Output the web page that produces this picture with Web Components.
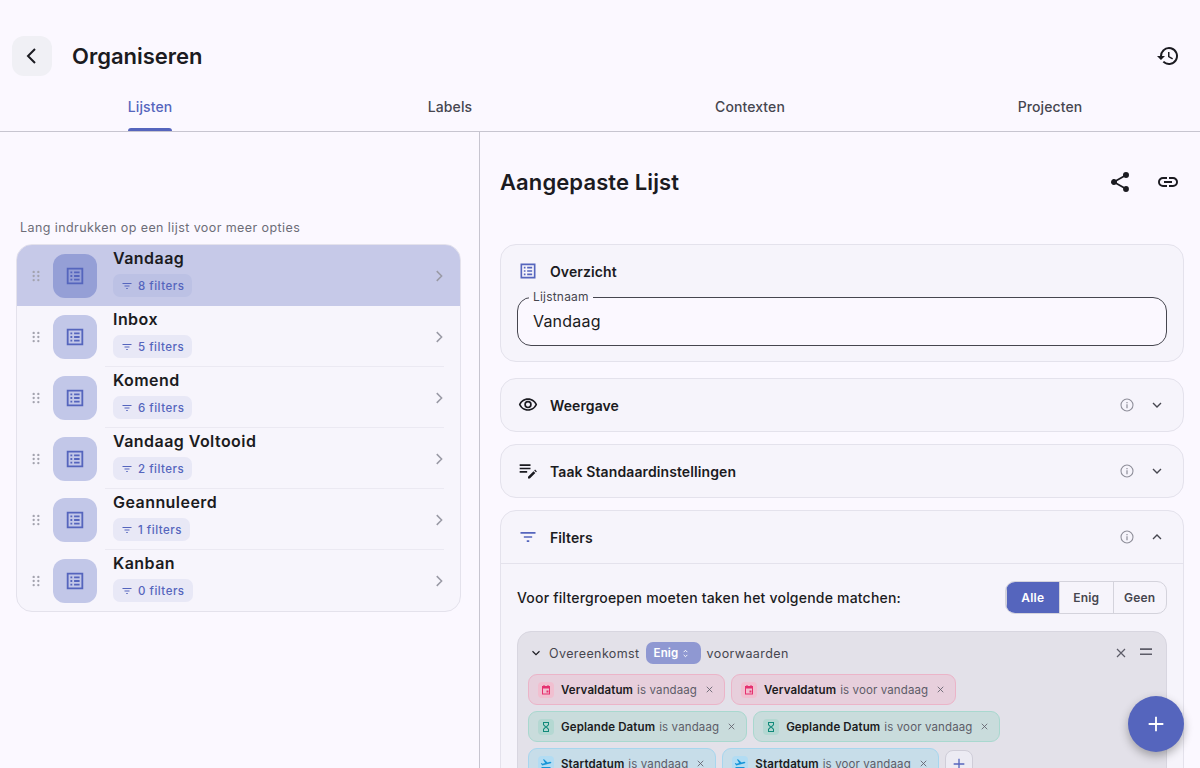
<!DOCTYPE html>
<html lang="nl">
<head>
<meta charset="utf-8">
<title>Organiseren</title>
<style>
  html, body { margin: 0; height: 100%; overflow: hidden; background: #fbf8ff; }
  body { font-family: Inter, "Liberation Sans", sans-serif; color: #1b1b21; }
</style>
</head>
<body>
<org-app></org-app>

<script>
// shared icon paths, 24x24 material style
const ICONS = {
  back: '<path d="M15 5l-7 7 7 7" fill="none" stroke="currentColor" stroke-width="2"/>',
  history: '<path fill="currentColor" d="M13 3a9 9 0 0 0-9 9H1l3.9 3.9.1.1L9 12H6a7 7 0 1 1 2.05 4.95l-1.42 1.42A9 9 0 1 0 13 3zm-1 5v5l4.25 2.52.77-1.28-3.52-2.09V8H12z"/>',
  share: '<path fill="currentColor" d="M18 16.08c-.76 0-1.44.3-1.96.77L8.91 12.7c.05-.23.09-.46.09-.7s-.04-.47-.09-.7l7.05-4.11c.54.5 1.25.81 2.04.81a3 3 0 1 0-3-3c0 .24.04.47.09.7L8.04 9.81A3 3 0 1 0 6 15c.79 0 1.5-.31 2.04-.81l7.12 4.16c-.05.21-.08.43-.08.65A2.92 2.92 0 1 0 18 16.08z"/>',
  link: '<path fill="currentColor" d="M3.9 12c0-1.71 1.39-3.1 3.1-3.1h4V7H7a5 5 0 0 0 0 10h4v-1.9H7c-1.71 0-3.1-1.39-3.1-3.1zM8 13h8v-2H8v2zm9-6h-4v1.9h4c1.71 0 3.1 1.39 3.1 3.1s-1.39 3.1-3.1 3.1h-4V17h4a5 5 0 0 0 0-10z"/>',
  list: '<path fill="currentColor" fill-rule="evenodd" d="M3 3h18v18H3V3zm2 2v14h14V5H5zm2 2h2v2H7V7zm4 0h6v2h-6V7zm-4 4h2v2H7v-2zm4 0h6v2h-6v-2zm-4 4h2v2H7v-2zm4 0h6v2h-6v-2z"/>',
  filter: '<path fill="currentColor" d="M3 6h18v2H3V6zm4 5h10v2H7v-2zm3.5 5h3v2h-3v-2z"/>',
  chevron: '<path d="M9 5.5l6.5 6.5L9 18.5" fill="none" stroke="currentColor" stroke-width="2"/>',
  down: '<path d="M6 9l6 6 6-6" fill="none" stroke="currentColor" stroke-width="2"/>',
  up: '<path d="M6 15l6-6 6 6" fill="none" stroke="currentColor" stroke-width="2"/>',
  eye: '<path fill="currentColor" d="M12 6a9.77 9.77 0 0 1 8.82 5.5A9.77 9.77 0 0 1 12 17a9.77 9.77 0 0 1-8.82-5.5A9.77 9.77 0 0 1 12 6m0-2C7 4 2.73 7.11 1 11.5 2.73 15.89 7 19 12 19s9.27-3.11 11-7.5C21.27 7.11 17 4 12 4zm0 5a2.5 2.5 0 1 1 0 5 2.5 2.5 0 0 1 0-5m0-2a4.5 4.5 0 1 0 0 9 4.5 4.5 0 0 0 0-9z"/>',
  edit: '<path fill="currentColor" d="M3 5h13v2H3V5zm0 4h13v2H3V9zm0 4h9v2H3v-2zm0 4h0zm11.5 5H13v-2.2l6.6-6.6 2.2 2.2-6.6 6.6h-.7zM20.4 12.4l1.1-1.1 2.2 2.2-1.1 1.1-2.2-2.2z" transform="translate(-1 -1)"/>',
  info: '<circle cx="12" cy="12" r="9" fill="none" stroke="currentColor" stroke-width="1.6"/><path fill="currentColor" d="M11.1 11h1.8v6h-1.8zM11.1 7.4h1.8v1.8h-1.8z"/>',
  close: '<path d="M6 6l12 12M18 6L6 18" fill="none" stroke="currentColor" stroke-width="1.8"/>',
  handle: '<path fill="currentColor" d="M3 5h18v2.4H3zM3 12.6h18V15H3z"/>',
  plus: '<path d="M12 4v16M4 12h16" fill="none" stroke="currentColor" stroke-width="2"/>',
  grip: '<g fill="currentColor"><circle cx="8" cy="5" r="2"/><circle cx="16" cy="5" r="2"/><circle cx="8" cy="12" r="2"/><circle cx="16" cy="12" r="2"/><circle cx="8" cy="19" r="2"/><circle cx="16" cy="19" r="2"/></g>',
  calendar: '<path fill="currentColor" fill-rule="evenodd" d="M7 2h2v2h6V2h2v2h3v17H4V4h3V2zM6 9v10h12V9H6zm7 4h4v4h-4v-4z"/>',
  hourglass: '<path fill="currentColor" fill-rule="evenodd" d="M6 2h12v6l-4 4 4 4v6H6v-6l4-4-4-4V2zm2 2v3.2L12 11l4-3.8V4H8zm4 9l-4 3.8V20h8v-3.2L12 13z"/>',
  plane: '<path fill="currentColor" d="M3 19h18v2H3v-2zm19.1-9.4c-.2-.8-1-1.3-1.8-1.1L15 10 8 3.5l-2 .5 4.2 7.2-5 1.4-2-1.6-1.5.4 2.6 4.6 17.2-4.6c.8-.2 1.3-1 1.1-1.8z" transform="translate(0 -1)"/>',
  updown: '<path d="M8 9l4-4 4 4M8 15l4 4 4-4" fill="none" stroke="currentColor" stroke-width="2"/>'
};

function icon(name, size) {
  return `<svg width="${size}" height="${size}" viewBox="0 0 24 24" style="display:block;flex:none">${ICONS[name]}</svg>`;
}

class OrgElement extends HTMLElement {
  constructor() {
    super();
    this.attachShadow({ mode: "open" });
  }
}

class OrgHeader extends OrgElement {
  connectedCallback() {
    this.shadowRoot.innerHTML = `
      <style>
        :host { display: flex; align-items: center; height: 40px; padding: 36px 20px 7px 12px; }
        #back { width: 40px; height: 40px; border-radius: 12px; background: #f0f0f5; display: flex; align-items: center; justify-content: center; color: #1b1b21; }
        h1 { margin: 0 0 0 20px; font-size: 22px; line-height: 40px; font-weight: 600; flex: 1; color: #1b1b21; }
        #hist { color: #1b1b21; }
      </style>
      <div id="back">${icon("back", 24)}</div>
      <h1><slot></slot></h1>
      <div id="hist">${icon("history", 24)}</div>`;
  }
}

class OrgTabs extends OrgElement {
  connectedCallback() {
    const active = this.getAttribute("active");
    const tabs = this.getAttribute("tabs").split(",");
    this.shadowRoot.innerHTML = `
      <style>
        :host { display: grid; grid-template-columns: repeat(4, 1fr); height: 48px; border-bottom: 1px solid #c7c5d0; }
        .tab { display: flex; justify-content: center; }
        span { position: relative; height: 48px; line-height: 48px; font-size: 14px; font-weight: 500; color: #46464f; letter-spacing: .1px; }
        .on span { color: #5565bd; }
        .on span::after { content: ""; position: absolute; left: 0; right: 0; bottom: 0; height: 3px; border-radius: 3px 3px 0 0; background: #5565bd; }
      </style>
      ${tabs.map(t => `<div class="tab ${t === active ? "on" : ""}"><span>${t}</span></div>`).join("")}`;
  }
}

class ListRow extends OrgElement {
  connectedCallback() {
    const sel = this.hasAttribute("selected");
    const last = this.hasAttribute("last");
    this.shadowRoot.innerHTML = `
      <style>
        :host { display: flex; align-items: center; height: 61px; box-sizing: border-box; position: relative; background: ${sel ? "#c6c9e8" : "transparent"}; }
        #grip { width: 36px; display: flex; justify-content: center; color: #a3a3ae; padding-left: 1px; box-sizing: border-box; }
        #tile { width: 44px; height: 44px; border-radius: 12px; background: ${sel ? "#959fd6" : "#c2c7e8"}; color: #5565bd; display: flex; align-items: center; justify-content: center; flex: none; }
        #text { flex: 1; margin-left: 16px; display: flex; flex-direction: column; align-items: flex-start; }
        #name { font-size: 16px; line-height: 20px; font-weight: 600; letter-spacing: .45px; color: #1b1b21; margin-top: -6px; }
        #chip { margin-top: 6px; height: 23px; display: flex; align-items: center; gap: 5px; padding: 0 8px 0 8px; border-radius: 7px; background: ${sel ? "#bcc1e4" : "#e8e8f6"}; color: #5565bd; font-size: 11.5px; font-weight: 500; letter-spacing: .5px; }
        #go { color: #9a9aa5; padding-right: 12px; }
        #line { position: absolute; left: 88px; right: 16px; bottom: 0; height: 1px; background: #ebe9f2; display: ${sel || last ? "none" : "block"}; }
      </style>
      <div id="grip">${icon("grip", 14)}</div>
      <div id="tile">${icon("list", 22)}</div>
      <div id="text">
        <div id="name"><slot></slot></div>
        <div id="chip">${icon("filter", 12)}<span>${this.getAttribute("filters")} filters</span></div>
      </div>
      <div id="go">${icon("chevron", 18)}</div>
      <div id="line"></div>`;
  }
}

class ListPanel extends OrgElement {
  connectedCallback() {
    this.shadowRoot.innerHTML = `
      <style>
        :host { display: block; width: 480px; box-sizing: border-box; padding: 87px 19px 0 16px; border-right: 1px solid #c7c5d0; height: 100%; flex: none; }
        p { margin: 0 0 8px 4px; font-size: 12.5px; line-height: 17px; color: #6d6d78; letter-spacing: .42px; }
        #box { border: 1px solid #e4e2ec; border-radius: 16px; overflow: hidden; background: #f7f5fc; width: 443px; margin-right: 0; }
      </style>
      <p>${this.getAttribute("hint")}</p>
      <div id="box"><slot></slot></div>`;
  }
}

class SectionCard extends OrgElement {
  connectedCallback() {
    const arrow = this.getAttribute("arrow");
    const tint = this.getAttribute("tint") || "#1b1b21";
    const right = arrow
      ? `<span id="info">${icon("info", 16)}</span><span id="arrow">${icon(arrow, 16)}</span>` : "";
    this.shadowRoot.innerHTML = `
      <style>
        :host { display: block; flex: none; border: 1px solid #e4e2ec; border-radius: 16px; background: #f6f4fb; }
        #head { display: flex; align-items: center; height: 52px; padding: 0 18px 0 17px; }
        #ico { color: ${tint}; width: 20px; }
        h3 { margin: 0 0 0 12px; flex: 1; font-size: 14px; font-weight: 600; color: #1b1b21; letter-spacing: .1px; }
        #info { color: #8e8e99; margin-right: 14px; }
        #arrow { color: #46464f; }
      </style>
      <div id="head">
        <div id="ico">${icon(this.getAttribute("icon"), 20)}</div>
        <h3>${this.getAttribute("label")}</h3>
        ${right}
      </div>
      <slot></slot>`;
  }
}

class OutlinedField extends OrgElement {
  connectedCallback() {
    this.shadowRoot.innerHTML = `
      <style>
        :host { display: block; margin: 0 16px 0 16px; height: 47px; border: 1px solid #46464f; border-radius: 14px; position: relative; background: #fbf8ff; }
        label { position: absolute; left: 11px; top: -8px; padding: 0 4px; font-size: 12px; line-height: 14px; color: #46464f; background: linear-gradient(#f6f4fb 50%, #fbf8ff 50%); letter-spacing: .2px; }
        div { padding-left: 15px; line-height: 47px; font-size: 16px; color: #1b1b21; letter-spacing: .2px; }
      </style>
      <label>${this.getAttribute("label")}</label>
      <div><slot></slot></div>`;
  }
}

class SegmentPicker extends OrgElement {
  connectedCallback() {
    const active = this.getAttribute("active");
    const opts = this.getAttribute("options").split(",");
    this.shadowRoot.innerHTML = `
      <style>
        :host { display: flex; height: 33px; flex: none; box-sizing: border-box; border: 1px solid #d4d3dc; border-radius: 10px; overflow: hidden; }
        span { width: 52.5px; display: flex; align-items: center; justify-content: center; font-size: 12px; font-weight: 600; color: #46464f; border-left: 1px solid #d4d3dc; letter-spacing: .2px; }
        span:first-child { border-left: 0; }
        .on { background: #5565bd; color: #fff; }
      </style>
      ${opts.map(o => `<span class="${o === active ? "on" : ""}">${o}</span>`).join("")}`;
  }
}

const CHIP_COLORS = {
  pink: { bg: "#e7cfdc", border: "#ebb4c8", tile: "#f1bfd0", fg: "#e5306f" },
  green: { bg: "#c9dcdc", border: "#a9d8cf", tile: "#b4d8d2", fg: "#10897a" },
  blue: { bg: "#c7dde9", border: "#a7d6ee", tile: "#b2dcf3", fg: "#1595d8" }
};

class FilterChip extends OrgElement {
  connectedCallback() {
    const c = CHIP_COLORS[this.getAttribute("color")];
    this.shadowRoot.innerHTML = `
      <style>
        :host { display: inline-flex; align-items: center; height: 31px; box-sizing: border-box; padding: 0 9px; border: 1px solid ${c.border}; background: ${c.bg}; border-radius: 9px; font-size: 11.5px; letter-spacing: .12px; color: #5d5c68; white-space: nowrap; }
        #tile { width: 16px; height: 16px; padding: 0; border-radius: 4px; background: ${c.tile}; color: ${c.fg}; display: flex; align-items: center; justify-content: center; margin-right: 7px; }
        b { font-weight: 600; color: #1b1b21; margin-right: 4px; }
        #x { color: #5d5c68; margin-left: 7px; }
      </style>
      <div id="tile">${icon(this.getAttribute("icon"), 12)}</div>
      <b>${this.getAttribute("field")}</b><span>${this.getAttribute("rule")}</span>
      <div id="x">${icon("close", 11)}</div>`;
  }
}

class FilterGroup extends OrgElement {
  connectedCallback() {
    this.shadowRoot.innerHTML = `
      <style>
        :host { display: block; margin: 0 16px; border: 1px solid #d8d6e0; border-radius: 14px 14px 0 0; background: #e3e1e9; padding: 0 10px 0 10px; height: 200px; box-sizing: border-box; }
        #top { display: flex; align-items: center; height: 42px; font-size: 12.5px; color: #46464f; letter-spacing: .4px; }
        #fold { color: #1b1b21; margin: 0 6px 0 1px; }
        #mode { margin: 0 6px 0 6px; height: 22px; width: 55px; box-sizing: border-box; padding-left: 8px; gap: 2px; display: flex; align-items: center; border-radius: 7px; background: #8f98d2; color: #fff; font-size: 11.5px; font-weight: 600; letter-spacing: .1px; }
        #tools { margin-left: auto; display: flex; align-items: center; gap: 9px; color: #5d5c68; padding-right: 2px; }
        #rows { display: flex; flex-direction: column; gap: 6px; }
        .row { display: flex; gap: 6px; align-items: center; }
        #add { width: 28px; height: 28px; box-sizing: border-box; border: 1px solid #cfcdd8; border-radius: 8px; background: #ecebf3; color: #5565bd; display: flex; align-items: center; justify-content: center; margin-left: 0; }
      </style>
      <div id="top">
        <span id="fold">${icon("down", 14)}</span>
        <span>Overeenkomst</span>
        <span id="mode">Enig ${icon("updown", 11)}</span>
        <span>voorwaarden</span>
        <span id="tools">${icon("close", 16)}${icon("handle", 16)}</span>
      </div>
      <div id="rows">
        <div class="row">
          <filter-chip color="pink" icon="calendar" field="Vervaldatum" rule="is vandaag"></filter-chip>
          <filter-chip color="pink" icon="calendar" field="Vervaldatum" rule="is voor vandaag"></filter-chip>
        </div>
        <div class="row">
          <filter-chip color="green" icon="hourglass" field="Geplande Datum" rule="is vandaag"></filter-chip>
          <filter-chip color="green" icon="hourglass" field="Geplande Datum" rule="is voor vandaag"></filter-chip>
        </div>
        <div class="row">
          <filter-chip color="blue" icon="plane" field="Startdatum" rule="is vandaag"></filter-chip>
          <filter-chip color="blue" icon="plane" field="Startdatum" rule="is voor vandaag"></filter-chip>
          <div id="add">${icon("plus", 16)}</div>
        </div>
      </div>`;
  }
}

class DetailPanel extends OrgElement {
  connectedCallback() {
    this.shadowRoot.innerHTML = `
      <style>
        :host { display: flex; flex-direction: column; gap: 12px; flex: 1; min-width: 0; padding: 0 16px 0 20px; overflow: hidden; }
        #title { display: flex; align-items: center; height: 100px; flex: none; padding-right: 4px; }
        h2 { margin: 0; flex: 1; font-size: 22px; font-weight: 600; color: #1b1b21; letter-spacing: .1px; }
        #acts { display: flex; gap: 24px; color: #1b1b21; }
      </style>
      <div id="title">
        <h2>${this.getAttribute("heading")}</h2>
        <div id="acts">${icon("share", 24)}${icon("link", 24)}</div>
      </div>
      <slot></slot>`;
  }
}

class OrgFab extends OrgElement {
  connectedCallback() {
    this.shadowRoot.innerHTML = `
      <style>
        :host { position: fixed; left: 1128px; top: 696px; width: 56px; height: 56px; border-radius: 50%; background: #5565bd; color: #fff; display: flex; align-items: center; justify-content: center; box-shadow: 0 4px 10px rgba(0,0,0,.3); }
      </style>
      ${icon("plus", 22)}`;
  }
}

class OrgApp extends OrgElement {
  connectedCallback() {
    this.shadowRoot.innerHTML = `
      <style>
        :host { display: flex; flex-direction: column; height: 768px; overflow: hidden; }
        #main { display: flex; flex: 1; min-height: 0; }
        #filter-body { border-top: 1px solid #e4e2ec; }
        #match { display: flex; align-items: center; height: 67px; padding: 0 16px; font-size: 14px; font-weight: 500; color: #1b1b21; letter-spacing: .2px; }
        #match span { flex: 1; }
      </style>
      <org-header>Organiseren</org-header>
      <org-tabs tabs="Lijsten,Labels,Contexten,Projecten" active="Lijsten"></org-tabs>
      <div id="main">
        <list-panel hint="Lang indrukken op een lijst voor meer opties">
          <list-row filters="8" selected>Vandaag</list-row>
          <list-row filters="5">Inbox</list-row>
          <list-row filters="6">Komend</list-row>
          <list-row filters="2">Vandaag Voltooid</list-row>
          <list-row filters="1">Geannuleerd</list-row>
          <list-row filters="0" last>Kanban</list-row>
        </list-panel>
        <detail-panel heading="Aangepaste Lijst">
          <section-card icon="list" tint="#5565bd" label="Overzicht" style="height:118px;margin-bottom:4px;box-sizing:border-box">
            <outlined-field label="Lijstnaam">Vandaag</outlined-field>
          </section-card>
          <section-card icon="eye" label="Weergave" arrow="down"></section-card>
          <section-card icon="edit" label="Taak Standaardinstellingen" arrow="down"></section-card>
          <section-card icon="filter" tint="#5565bd" label="Filters" arrow="up">
            <div id="filter-body">
              <div id="match"><span>Voor filtergroepen moeten taken het volgende matchen:</span>
                <segment-picker options="Alle,Enig,Geen" active="Alle"></segment-picker>
              </div>
              <filter-group></filter-group>
            </div>
          </section-card>
        </detail-panel>
      </div>
      <org-fab></org-fab>`;
  }
}

customElements.define("org-header", OrgHeader);
customElements.define("org-tabs", OrgTabs);
customElements.define("list-row", ListRow);
customElements.define("list-panel", ListPanel);
customElements.define("section-card", SectionCard);
customElements.define("outlined-field", OutlinedField);
customElements.define("segment-picker", SegmentPicker);
customElements.define("filter-chip", FilterChip);
customElements.define("filter-group", FilterGroup);
customElements.define("detail-panel", DetailPanel);
customElements.define("org-fab", OrgFab);
customElements.define("org-app", OrgApp);
</script>
</body>
</html>
